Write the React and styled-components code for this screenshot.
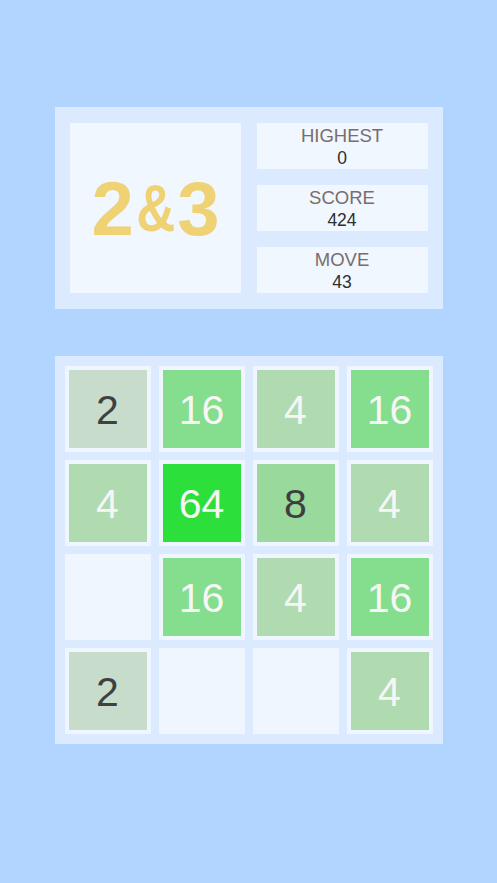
import React from "react";
import styled, { createGlobalStyle } from "styled-components";

const GlobalStyle = createGlobalStyle`
  html, body {
    margin: 0;
    padding: 0;
    background: #b1d5fe;
  }
  body {
    font-family: "Liberation Sans", Arial, sans-serif;
  }
`;

const Page = styled.div`
  min-height: 883px;
  display: flex;
  flex-direction: column;
  align-items: center;
  padding-top: 107px;
  box-sizing: border-box;
  background: #b1d5fe;
`;

const Header = styled.div`
  width: 388px;
  box-sizing: border-box;
  padding: 16px 15px 16px 15px;
  background: #dbeafe;
  display: grid;
  grid-template-columns: 1fr 1fr;
  column-gap: 16px;
`;

const Logo = styled.div`
  height: 170px;
  background: #f0f7ff;
  display: flex;
  align-items: center;
  justify-content: center;
  color: #efd274;
  font-weight: bold;
  font-size: 76px;
  letter-spacing: -1px;
`;

const Amp = styled.span`
  display: inline-block;
  font-size: 66px;
  margin: 0 -1px;
  transform: scaleX(0.82);
`;

const Stats = styled.div`
  display: flex;
  flex-direction: column;
  gap: 16px;
`;

const Stat = styled.div`
  height: 46px;
  background: #f0f7ff;
  display: flex;
  flex-direction: column;
  align-items: center;
  justify-content: center;
  line-height: 22px;
  padding-top: 2px;
  box-sizing: border-box;
`;

const Label = styled.div`
  color: #7a6c6c;
  font-size: 18.5px;
`;

const Value = styled.div`
  color: #2f2f2f;
  font-size: 17.5px;
`;

const Board = styled.div`
  margin-top: 47px;
  width: 388px;
  box-sizing: border-box;
  padding: 10px;
  background: #dbeafe;
  display: grid;
  grid-template-columns: repeat(4, 1fr);
  grid-auto-rows: 86px;
  gap: 8px;
`;

const Cell = styled.div`
  background: #eff6ff;
  padding: 4px;
  display: flex;
`;

const tileColors = {
  2: { bg: "#c8dccb", fg: "#404040" },
  4: { bg: "#b0dbb0", fg: "#f6f6f6" },
  8: { bg: "#99d99b", fg: "#3e3e3e" },
  16: { bg: "#84de8e", fg: "#f6f6f6" },
  64: { bg: "#2ddf3a", fg: "#f6f6f6" },
};

const Tile = styled.div`
  flex: 1;
  background: ${({ $value }) => tileColors[$value].bg};
  color: ${({ $value }) => tileColors[$value].fg};
  display: flex;
  align-items: center;
  justify-content: center;
  font-size: 41px;
  padding-top: 3px;
`;

const grid = [
  [2, 16, 4, 16],
  [4, 64, 8, 4],
  [0, 16, 4, 16],
  [2, 0, 0, 4],
];

export default function App() {
  return (
    <>
      <GlobalStyle />
      <Page>
        <Header>
          <Logo>
            2<Amp>&amp;</Amp>3
          </Logo>
          <Stats>
            <Stat>
              <Label>HIGHEST</Label>
              <Value>0</Value>
            </Stat>
            <Stat>
              <Label>SCORE</Label>
              <Value>424</Value>
            </Stat>
            <Stat>
              <Label>MOVE</Label>
              <Value>43</Value>
            </Stat>
          </Stats>
        </Header>
        <Board>
          {grid.flat().map((v, i) => (
            <Cell key={i}>{v ? <Tile $value={v}>{v}</Tile> : null}</Cell>
          ))}
        </Board>
      </Page>
    </>
  );
}
